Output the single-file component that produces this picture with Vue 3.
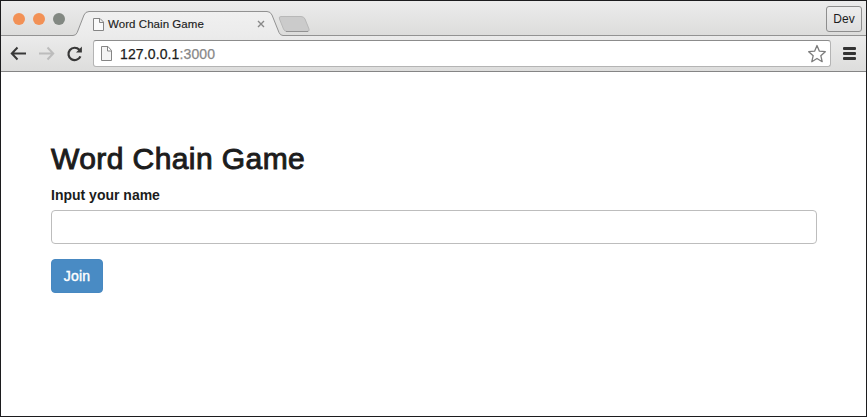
<script setup>
import { ref } from 'vue'

const title = 'Word Chain Game'
const name = ref('')
</script>

<template>
  <div class="window">
    <header class="tabstrip">
      <svg class="strip-art" width="865" height="35" viewBox="1 1 865 35">
        <defs>
          <linearGradient id="tabfill" x1="0" y1="0" x2="0" y2="1">
            <stop offset="0" stop-color="#f0f0f0" />
            <stop offset="1" stop-color="#ebebeb" />
          </linearGradient>
        </defs>
        <path d="M1 35.5H73Q76 35.5 77.2 32.5L84 15Q85.5 11.5 89 11.5H267Q270.5 11.5 272 15L279 32.5Q280.2 35.5 283 35.5H866V37H1Z" fill="url(#tabfill)" />
        <path d="M1 35.5H73Q76 35.5 77.2 32.5L84 15Q85.5 11.5 89 11.5H267Q270.5 11.5 272 15L279 32.5Q280.2 35.5 283 35.5H866" fill="none" stroke="#929292" />
        <path d="M281 16.5H301Q304 16.5 305 19L309 29Q310 31.5 307 31.5H287Q284.5 31.5 283.5 29L279.5 19Q278.5 16.5 281 16.5Z" fill="#cbcbcb" stroke="#b8b8b8" />
        <path d="M286 31.5H308" stroke="#929292" />
      </svg>
      <div class="lights">
        <i class="light"></i><i class="light"></i><i class="light gray"></i>
      </div>
      <div class="tab">
        <svg width="12" height="15" viewBox="0 0 12 15">
          <path d="M.5 1.5H7L10.5 5V13.5H.5ZM6.5 1.5V5.5H10.5" fill="#fafafa" stroke="#858585" />
        </svg>
        <span class="tab-title">{{ title }}</span>
        <svg class="close" width="8" height="8" viewBox="0 0 8 8">
          <path d="M1 1L7 7M7 1L1 7" stroke="#888" stroke-width="1.4" />
        </svg>
      </div>
      <button class="dev">Dev</button>
    </header>
    <nav class="toolbar">
      <svg class="nav-icons" width="92" height="35" viewBox="1 36 92 35">
        <path d="M26 53.5H12.5M17.5 47.5L11.8 53.5L17.5 59.5" fill="none" stroke="#383838" stroke-width="2" />
        <path d="M39 53.5H52.500M47.5 47.5L53.2 53.5L47.5 59.5" fill="none" stroke="#bcbcbc" stroke-width="2" />
        <path d="M79.3 49.8A6.2 6.2 0 1 0 80.4 56.3" fill="none" stroke="#383838" stroke-width="2.200" />
        <path d="M81.900 46.5V52.500H76Z" fill="#383838" />
      </svg>
      <div class="address">
        <svg width="12" height="16" viewBox="0 0 12 16">
          <path d="M.5 .5H7L10.5 4.5V14.5H.5ZM6.5 .5V5H10.5" fill="#f4f4f4" stroke="#858585" />
        </svg>
        <span class="url">127.0.0.1<span class="port">:3000</span></span>
        <svg class="star" width="20" height="20" viewBox="0 0 20 20">
          <path d="M10 1.5L12.400 7.200L18.300 7.700L13.800 11.700L15.200 17.700L10 14.500L4.800 17.700L6.200 11.700L1.700 7.700L7.600 7.200Z" fill="#fff" stroke="#7c7c7c" stroke-width="1.300" stroke-linejoin="round" />
        </svg>
      </div>
      <div class="menu"><i></i><i></i><i></i></div>
    </nav>
    <main>
      <h1>{{ title }}</h1>
      <label for="name">Input your name</label>
      <input id="name" v-model="name" type="text">
      <button class="join">Join</button>
    </main>
  </div>
</template>

<style>
body {
  margin: 0;
  overflow: hidden;
}
</style>

<style scoped>
.window {
  box-sizing: border-box;
  width: 867px;
  height: 417px;
  border: 1px solid #1c1c1e;
  background: #fff;
  color: #1c1c1c;
  font-family: "Liberation Sans", Arial, sans-serif;
}
.tabstrip {
  position: relative;
  display: flex;
  height: 35px;
  background: linear-gradient(#ececec, #dcdcdb);
}
.strip-art {
  position: absolute;
  inset: 0;
}
.lights {
  position: relative;
  display: flex;
  gap: 8px;
  width: 79px;
  padding: 12px 0 0 12px;
  box-sizing: border-box;
}
.light {
  width: 12px;
  height: 12px;
  border-radius: 50%;
  background: #f29156;
}
.light.gray {
  background: #828882;
}
.tab {
  position: relative;
  display: flex;
  align-items: center;
  box-sizing: border-box;
  width: 185px;
  height: 24px;
  margin: 11px 0 0 13px;
}
.tab-title {
  margin-left: 3px;
  font-size: 11.5px;
  line-height: 14px;
  letter-spacing: 0.06px;
  white-space: nowrap;
  -webkit-text-stroke: 0.15px #1c1c1c;
}
.close {
  margin-left: auto;
  margin-right: 13px;
}
.dev {
  position: relative;
  box-sizing: border-box;
  width: 36px;
  height: 26px;
  margin: 5px 4px 0 auto;
  padding: 0;
  border: 1px solid #8e8e8e;
  border-radius: 3px;
  background: linear-gradient(#eee, #dedede);
  color: #1c1c1c;
  font: 12px "Liberation Sans", Arial, sans-serif;
}
.toolbar {
  display: flex;
  box-sizing: border-box;
  height: 36px;
  border-bottom: 1px solid #858585;
  background: linear-gradient(#ebebeb, #dddddc);
}
.address {
  display: flex;
  align-items: center;
  box-sizing: border-box;
  width: 738px;
  height: 27px;
  margin-top: 4px;
  padding: 0 3px 0 7px;
  border: 1px solid #b4b4b4;
  border-top-color: #8c8c8c;
  border-radius: 3px;
  background: #fff;
}
.url {
  margin-left: 7px;
  font-size: 14px;
  letter-spacing: 0.12px;
  -webkit-text-stroke-width: 0.25px;
}
.port {
  color: #888;
}
.star {
  margin-left: auto;
}
.menu {
  display: flex;
  flex-direction: column;
  gap: 2px;
  width: 13px;
  padding: 11px 0 0 12px;
}
.menu i {
  height: 3px;
  border-radius: 1px;
  background: #333;
}
main {
  display: flex;
  flex-direction: column;
  align-items: flex-start;
  padding: 70px 49px 0 50px;
}
h1 {
  margin: 0;
  font-size: 30px;
  font-weight: 400;
  line-height: 33px;
  letter-spacing: 0.42px;
  -webkit-text-stroke: 0.95px #1c1c1c;
}
label {
  margin-top: 10px;
  font-size: 14px;
  font-weight: 700;
  line-height: 20px;
}
input {
  box-sizing: border-box;
  width: 766px;
  height: 34px;
  margin-top: 5px;
  padding: 6px 12px;
  border: 1px solid #bdbdbd;
  border-radius: 4px;
  outline: 0;
  background: #fff;
  font: 14px "Liberation Sans", Arial, sans-serif;
}
.join {
  box-sizing: border-box;
  width: 52px;
  height: 34px;
  margin-top: 15px;
  padding: 0;
  border: 1px solid #4788c1;
  border-radius: 4px;
  background: #498bc4;
  color: #fff;
  font: 14px "Liberation Sans", Arial, sans-serif;
  letter-spacing: 0.15px;
  -webkit-text-stroke: 0.4px #fff;
}
</style>
